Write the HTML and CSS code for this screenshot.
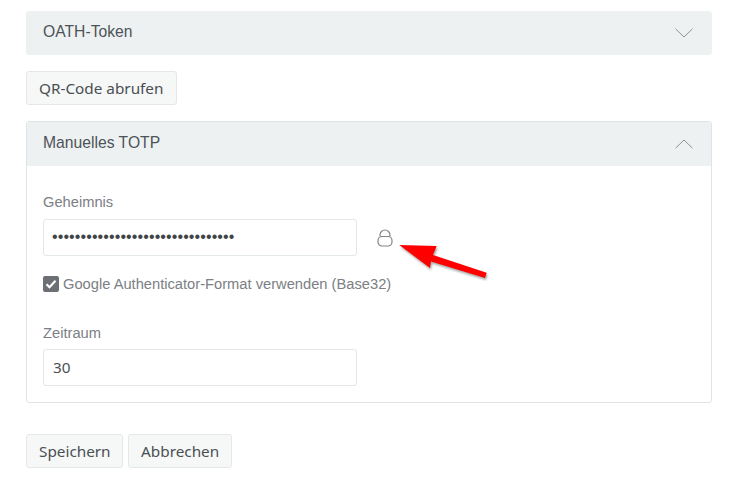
FILE: index.html
```html
<!DOCTYPE html>
<html lang="de">
<head>
<meta charset="utf-8">
<title>OATH-Token</title>
<link rel="stylesheet" href="styles.css">
</head>
<body>
<main class="page">
  <section class="bar bar-closed">
    <span class="bar-title">OATH-Token</span>
    <svg class="chevron" width="18" height="10" viewBox="0 0 18 10"><path d="M.5.8 9 9l8.500-8.200" fill="none" stroke="#8d9396" stroke-width="1"/></svg>
  </section>
  <div class="row-qr"><button class="btn btn-qr" type="button">QR-Code abrufen</button></div>
  <section class="panel">
    <header class="bar bar-open">
      <span class="bar-title">Manuelles TOTP</span>
      <svg class="chevron" width="18" height="10" viewBox="0 0 18 10"><path d="M.5 9.200 9 1l8.500 8.200" fill="none" stroke="#8d9396" stroke-width="1"/></svg>
    </header>
    <div class="panel-body">
      <label class="field-label">Geheimnis</label>
      <div class="secret-row">
        <div class="input input-secret">••••••••••••••••••••••••••••••••</div>
        <svg class="lock" width="16" height="20" viewBox="0 0 16 20"><path d="M3 8.500V7a5 5 0 0 1 10 0V8.500" fill="none" stroke="#808588" stroke-width="1.200"/><rect x="1" y="8.500" width="14" height="9.500" rx="4" fill="none" stroke="#808588" stroke-width="1.200"/></svg>
      </div>
      <div class="check-row">
        <span class="checkbox"><svg width="16" height="16" viewBox="0 0 16 16"><path d="M3.500 8.300 6.500 11.200 12.500 4.800" fill="none" stroke="#fff" stroke-width="2.200"/></svg></span>
        <span class="check-label">Google Authenticator-Format verwenden (Base32)</span>
      </div>
      <label class="field-label">Zeitraum</label>
      <div class="input input-number">30</div>
    </div>
  </section>
  <div class="actions">
    <button class="btn btn-save" type="button">Speichern</button>
    <button class="btn btn-cancel" type="button">Abbrechen</button>
  </div>
</main>
<svg class="arrow" width="100" height="50" viewBox="0 0 100 50"><path d="M1.300 7 38.700 8 35 17 88.700 34.700 87 40 33 23.500 32 30Z" fill="#f00" style="filter:drop-shadow(1px 2px 1px rgba(0,0,0,.35))"/></svg>
</body>
</html>
```
FILE: styles.css
```css
* { box-sizing: border-box; }
html, body { margin: 0; background: #fff; }
body { width: 744px; height: 495px; overflow: hidden; position: relative; }
.page { width: 686px; margin-left: 26px; padding-top: 11px; display: flex; flex-direction: column; font-family: "Liberation Sans", Arial, sans-serif; }
.bar { height: 44px; background: #edf1f2; display: flex; align-items: center; justify-content: space-between; padding: 0 18px 0 16px; }
.bar-closed { border-radius: 3px; border: 1px solid #eef1f2; }
.bar-open { height: 44px; border-bottom: 0; }
.bar-title { font-size: 15.7px; color: #4d5357; position: relative; top: -1px; }
.chevron { display: block; }
.row-qr { margin-top: 16px; height: 34px; }
.btn { height: 34px; padding: 0 12px; background: #f6f8f8; border: 1px solid #e4e8e9; border-radius: 3px; font-family: "Noto Sans", "Open Sans", sans-serif; font-size: 15.3px; color: #4a4f52; }
.btn-qr { padding: 0 13px 0 12px; }
.btn-save { padding: 0 11px 0 12px; }
.btn-cancel { padding: 0 12px 0 12.500px; }
.panel { margin-top: 16px; height: 282px; border: 1px solid #dfe5e6; border-radius: 3px; }
.panel-body { padding: 26px 16px 0; }
.field-label { display: block; font-size: 14.7px; line-height: 20px; color: #7b8084; }
.input { width: 314px; height: 36.500px; border: 1px solid #e2e7e8; border-radius: 3px; padding: 0 9px; display: flex; align-items: center; font-family: "Noto Sans", "Open Sans", sans-serif; font-size: 15.3px; color: #4a4f52; background: #fff; }
.secret-row { display: flex; align-items: center; gap: 20px; margin-top: 7px; }
.input-secret { font-family: "Liberation Sans", sans-serif; font-size: 16px; letter-spacing: .1px; color: #3f4447; padding-left: 8px; }
.input-number { padding-left: 9px; }
.lock { display: block; margin-top: 2px; }
.check-row { display: flex; align-items: center; gap: 4px; margin-top: 18px; height: 20px; }
.checkbox { width: 16px; height: 16px; background: #6c7074; border-radius: 2px; display: block; }
.checkbox svg { display: block; }
.check-label { font-size: 14.7px; color: #7b8084; }
.check-row + .field-label { margin-top: 29.500px; margin-bottom: 6px; }
.actions { margin-top: 31px; display: flex; gap: 5px; }
.arrow { position: absolute; left: 398px; top: 238px; }
```
